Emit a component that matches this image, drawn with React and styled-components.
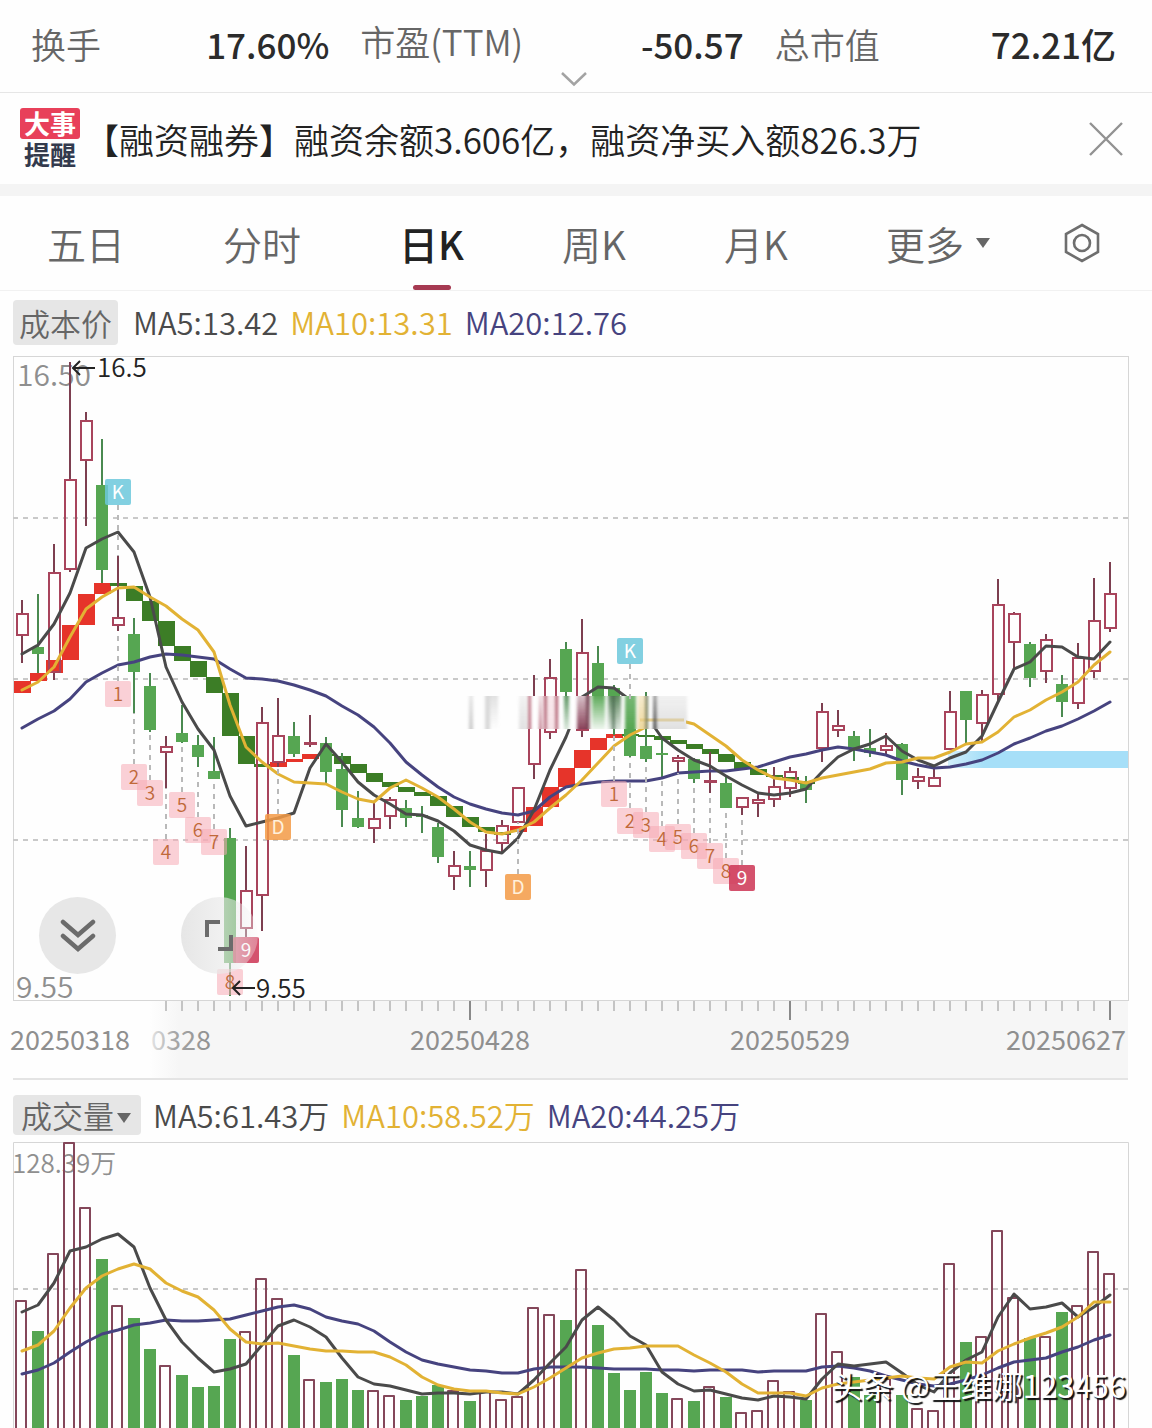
import { useState } from 'react';
import styled, { createGlobalStyle } from 'styled-components';

const COLORS = {
  up: '#a8445c',
  upWick: '#7d3f50',
  down: '#56a652',
  downWick: '#4a8a50',
  stepUp: '#e6342a',
  stepDown: '#3c7d26',
  ma5: '#4a4a4a',
  ma10: '#e2b234',
  ma20: '#46437f',
  grid: '#c9c9c9',
  frame: '#d6d6d6',
};

// one candle every 16 units, the first one at x = 22
const STEP = 16;
const xOf = (i) => 22 + i * STEP;

// [high, body top, body bottom, low, rising]
const candles = [
  [600, 614, 635, 663, 1],
  [594, 647, 654, 673, 0],
  [544, 573, 672, 680, 1],
  [362, 480, 569, 572, 1],
  [412, 421, 460, 526, 1],
  [439, 485, 570, 583, 0],
  [556, 618, 625, 631, 1],
  [618, 634, 672, 713, 0],
  [673, 686, 730, 732, 0],
  [736, 747, 752, 788, 1],
  [705, 733, 742, 743, 0],
  [735, 745, 757, 767, 0],
  [737, 771, 779, 779, 0],
  [828, 838, 963, 996, 0],
  [846, 891, 928, 937, 1],
  [707, 723, 895, 931, 1],
  [698, 736, 762, 767, 1],
  [722, 736, 754, 757, 0],
  [715, 743, 744, 747, 1],
  [737, 743, 772, 783, 0],
  [753, 769, 810, 827, 0],
  [791, 818, 827, 828, 0],
  [803, 819, 828, 843, 1],
  [797, 800, 816, 829, 1],
  [800, 808, 818, 827, 0],
  [806, 815, 816, 833, 0],
  [823, 827, 857, 863, 0],
  [851, 866, 876, 890, 1],
  [851, 866, 870, 887, 0],
  [834, 851, 870, 887, 1],
  [820, 826, 843, 852, 1],
  [788, 788, 822, 822, 1],
  [675, 705, 764, 779, 1],
  [659, 678, 732, 739, 1],
  [642, 649, 692, 720, 0],
  [619, 653, 730, 737, 1],
  [646, 663, 715, 720, 0],
  [685, 688, 712, 735, 0],
  [697, 700, 756, 757, 0],
  [692, 746, 759, 762, 0],
  [738, 753, 754, 778, 0],
  [755, 758, 761, 773, 1],
  [758, 759, 779, 783, 0],
  [752, 781, 782, 793, 1],
  [776, 783, 808, 808, 0],
  [798, 798, 807, 815, 1],
  [792, 800, 803, 817, 1],
  [767, 787, 799, 807, 1],
  [767, 772, 788, 797, 1],
  [776, 784, 790, 803, 0],
  [703, 712, 748, 762, 1],
  [710, 726, 730, 737, 1],
  [731, 736, 748, 761, 0],
  [729, 748, 753, 757, 0],
  [733, 746, 750, 754, 1],
  [743, 744, 780, 795, 0],
  [768, 777, 781, 789, 1],
  [767, 778, 786, 786, 1],
  [691, 712, 749, 749, 1],
  [691, 691, 720, 744, 0],
  [690, 695, 723, 743, 1],
  [579, 605, 694, 703, 1],
  [612, 614, 642, 668, 1],
  [642, 644, 678, 687, 0],
  [634, 640, 671, 683, 1],
  [675, 684, 702, 717, 0],
  [643, 658, 703, 709, 1],
  [578, 621, 671, 678, 1],
  [562, 594, 628, 632, 1],
];

// [top, bottom, rising]
const steps = [
  [681, 693, 1], [673, 681, 1], [660, 673, 1], [625, 660, 1], [594, 625, 1],
  [583, 594, 1], [583, 586, 0], [586, 601, 0], [601, 621, 0], [621, 646, 0],
  [646, 661, 0], [661, 677, 0], [677, 693, 0], [693, 736, 0], [736, 764, 0],
  [764, 767, 0], [762, 767, 1], [759, 762, 1], [754, 759, 1], [754, 756, 0],
  [756, 764, 0], [764, 773, 0], [773, 782, 0], [782, 787, 0], [787, 792, 0],
  [792, 796, 0], [796, 806, 0], [806, 817, 0], [817, 827, 0], [827, 832, 0],
  [832, 835, 0], [826, 832, 1], [807, 826, 1], [787, 807, 1], [768, 787, 1],
  [750, 768, 1], [738, 750, 1], [734, 738, 1], [734, 736, 0], [735, 737, 0],
  [736, 740, 0], [740, 744, 0], [744, 749, 0], [749, 754, 0], [754, 762, 0],
  [762, 769, 0], [769, 775, 0], [775, 777, 0], [777, 780, 0], [781, 784, 0],
];

const priceMa5 = [
  654, 645, 624, 593, 548, 539, 532, 552, 597, 667, 702, 729, 750, 796, 826,
  822, 818, 813, 768, 744, 762, 782, 795, 804, 814, 815, 821, 831, 845, 850,
  853, 838, 810, 770, 737, 697, 687, 688, 700, 715, 738, 750, 760, 766, 776,
  785, 793, 795, 793, 789, 772, 757, 749, 744, 736, 751, 760, 766, 758, 752,
  736, 702, 669, 662, 646, 647, 657, 659, 642,
];

const priceMa10 = [
  690, 682, 667, 637, 609, 597, 588, 587, 597, 606, 619, 630, 652, 705, 747,
  762, 774, 782, 783, 784, 792, 799, 802, 788, 780, 788, 797, 809, 822, 832,
  834, 830, 822, 808, 795, 780, 763, 746, 735, 727, 720, 720, 724, 735, 746,
  760, 770, 778, 780, 783, 778, 775, 772, 769, 763, 762, 758, 758, 752, 744,
  742, 732, 717, 710, 700, 692, 682, 665, 652,
];

const priceMa20 = [
  728, 719, 711, 699, 682, 673, 665, 662, 657, 654, 655, 657, 659, 669, 678,
  679, 681, 685, 690, 696, 706, 715, 727, 743, 762, 775, 787, 797, 804, 809,
  813, 815, 811, 797, 787, 784, 782, 781, 781, 781, 778, 773, 772, 771, 771,
  769, 767, 762, 757, 754, 750, 747, 749, 752, 755, 761, 765, 768, 767, 764,
  760, 753, 744, 738, 731, 726, 719, 711, 702,
];

// [candle, centre y, text, kind, start of the dashed leader]
const markers = [
  [6, 694, '1', 'count', 631],
  [7, 777, '2', 'count', 713],
  [8, 793, '3', 'count', 732],
  [9, 852, '4', 'count', 788],
  [10, 805, '5', 'count', 743],
  [11, 830, '6', 'count', 767],
  [12, 842, '7', 'count', 779],
  [13, 982, '8', 'count', 969],
  [14, 950, '9', 'last', 937],
  [37, 794, '1', 'count', 735],
  [38, 821, '2', 'count', 757],
  [39, 825, '3', 'count', 762],
  [40, 839, '4', 'count', 778],
  [41, 837, '5', 'count', 773],
  [42, 846, '6', 'count', 783],
  [43, 856, '7', 'count', 793],
  [44, 871, '8', 'count', 808],
  [45, 878, '9', 'last', 815],
  [6, 492, 'K', 'sell', 556],
  [38, 651, 'K', 'sell', 700],
  [16, 827, 'D', 'buy', 767],
  [31, 887, 'D', 'buy', 822],
];

const markerStyle = {
  count: { fill: '#f5a9b4', opacity: 0.55, color: '#c0693a' },
  last: { fill: '#cc3453', opacity: 0.85, color: '#fff' },
  sell: { fill: '#6cc8dc', opacity: 0.85, color: '#fff' },
  buy: { fill: '#f39a45', opacity: 0.85, color: '#fff0dc' },
};

// [x, width, colour, top opacity, bottom opacity] of the masked strip
const smears = [
  [469, 4, '#b5b5b5', 0.3, 0.7],
  [485, 5, '#b5b5b5', 0.5, 0.5],
  [490, 8, '#c5c5c5', 0.5, 0],
  [519, 8, '#c5c5c5', 0.2, 0.5],
  [528, 3, '#a8445c', 0.7, 0.8],
  [539, 3, '#a8445c', 0.2, 0.7],
  [545, 12, '#f3d3da', 0.5, 0.6],
  [544, 3, '#a8445c', 0.9, 0.8],
  [555, 3, '#a8445c', 0.9, 0.8],
  [564, 5, '#4a8a50', 0.9, 0.2],
  [577, 12, '#7d2f48', 0.3, 0.9],
  [586, 4, '#6b3a4a', 0.9, 0.5],
  [592, 13, '#56a652', 0.95, 0.1],
  [608, 13, '#4f7d50', 0.9, 0.2],
  [612, 3, '#4a6a50', 0.9, 0.7],
  [625, 11, '#56a652', 0.8, 1],
  [638, 10, '#e9cf86', 0.4, 0.8],
  [645, 3, '#5d6b4c', 0.8, 0.8],
  [653, 4, '#4a4a4a', 0.5, 0.9],
  [657, 30, '#bdbdbd', 0.2, 0.45],
];

// [bar top, rising]
const volumes = [
  [1300, 1], [1331, 0], [1253, 1], [1142, 1], [1207, 1], [1259, 0], [1305, 1],
  [1318, 0], [1349, 0], [1365, 1], [1375, 0], [1387, 0], [1386, 0], [1339, 0],
  [1331, 1], [1278, 1], [1298, 1], [1355, 0], [1379, 1], [1382, 0], [1379, 0],
  [1390, 0], [1390, 1], [1395, 1], [1400, 0], [1396, 0], [1385, 0], [1390, 1],
  [1401, 0], [1390, 1], [1399, 1], [1396, 1], [1307, 1], [1314, 1], [1320, 0],
  [1269, 1], [1325, 0], [1373, 0], [1390, 0], [1372, 0], [1393, 0], [1398, 1],
  [1401, 0], [1386, 1], [1397, 0], [1412, 1], [1410, 1], [1380, 1], [1391, 1],
  [1400, 0], [1313, 1], [1351, 1], [1377, 0], [1395, 0], [1378, 1], [1395, 0],
  [1408, 1], [1410, 1], [1263, 1], [1342, 0], [1336, 1], [1230, 1], [1297, 1],
  [1338, 0], [1336, 1], [1312, 0], [1305, 1], [1251, 1], [1273, 1],
];

const volumeMa5 = [
  1312, 1305, 1283, 1251, 1247, 1239, 1234, 1247, 1288, 1320, 1342, 1358, 1372,
  1369, 1364, 1345, 1326, 1320, 1327, 1337, 1358, 1377, 1384, 1386, 1390, 1394,
  1393, 1393, 1394, 1392, 1392, 1394, 1380, 1363, 1347, 1320, 1307, 1320, 1336,
  1345, 1372, 1384, 1391, 1390, 1394, 1398, 1400, 1396, 1397, 1399, 1379, 1364,
  1366, 1364, 1362, 1373, 1385, 1392, 1373, 1360, 1352, 1317, 1294, 1309, 1307,
  1303, 1317, 1307, 1295,
];

const volumeMa10 = [
  1351, 1345, 1331, 1308, 1288, 1276, 1269, 1264, 1269, 1283, 1291, 1297, 1310,
  1329, 1342, 1344, 1343, 1346, 1349, 1351, 1351, 1352, 1352, 1357, 1365, 1377,
  1385, 1389, 1391, 1391, 1393, 1394, 1387, 1378, 1368, 1358, 1353, 1349, 1348,
  1346, 1346, 1346, 1355, 1363, 1372, 1384, 1393, 1393, 1393, 1396, 1388, 1384,
  1382, 1380, 1378, 1376, 1378, 1379, 1367, 1362, 1363, 1351, 1344, 1338, 1333,
  1327, 1317, 1302, 1302,
];

const volumeMa20 = [
  1374, 1370, 1363, 1352, 1342, 1334, 1330, 1325, 1323, 1320, 1321, 1321, 1320,
  1319, 1315, 1311, 1307, 1305, 1309, 1317, 1321, 1324, 1331, 1342, 1352, 1360,
  1364, 1367, 1370, 1371, 1373, 1373, 1369, 1367, 1367, 1367, 1368, 1369, 1369,
  1369, 1370, 1370, 1371, 1370, 1370, 1370, 1372, 1371, 1371, 1371, 1367, 1366,
  1368, 1371, 1376, 1380, 1384, 1386, 1384, 1380, 1375, 1368, 1362, 1360, 1358,
  1352, 1347, 1340, 1335,
];

const toPoints = (values) => values.map((y, i) => `${xOf(i)},${y}`).join(' ');

const tabs = ['五日', '分时', '日K', '周K', '月K'];

export default function App() {
  const [tab, setTab] = useState('日K');
  const [alertOpen, setAlertOpen] = useState(true);

  return (
    <>
      <GlobalStyle />
      <Page>
        <Quotes>
          <QuoteList>
            <Quote>
              <QuoteLabel>换手</QuoteLabel>
              <QuoteValue>17.60%</QuoteValue>
            </Quote>
            <Quote>
              <QuoteLabel $raised>市盈(TTM)</QuoteLabel>
              <QuoteValue>-50.57</QuoteValue>
            </Quote>
            <Quote>
              <QuoteLabel>总市值</QuoteLabel>
              <QuoteValue>72.21亿</QuoteValue>
            </Quote>
          </QuoteList>
          <ExpandButton type="button" aria-label="展开">
            <svg width="28" height="16" viewBox="0 0 28 16">
              <path
                d="M2 2 L14 13.500 L26 2"
                fill="none"
                stroke="#a3a3a3"
                strokeWidth="2.500"
              />
            </svg>
          </ExpandButton>
        </Quotes>

        {alertOpen && (
          <Alert>
            <AlertLogo>
              <AlertLogoTop>大事</AlertLogoTop>
              <AlertLogoBottom>提醒</AlertLogoBottom>
            </AlertLogo>
            <AlertText href="#margin">
              【融资融券】融资余额3.606亿，融资净买入额826.3万
            </AlertText>
            <IconButton
              type="button"
              aria-label="关闭"
              onClick={() => setAlertOpen(false)}
            >
              <svg width="36" height="36" viewBox="0 0 36 36">
                <path
                  d="M2 2 L34 34 M34 2 L2 34"
                  fill="none"
                  stroke="#929292"
                  strokeWidth="2.400"
                />
              </svg>
            </IconButton>
          </Alert>
        )}

        <TabBar>
          <TabList>
            {tabs.map((name) => (
              <Tab
                key={name}
                type="button"
                $active={name === tab}
                onClick={() => setTab(name)}
              >
                {name}
              </Tab>
            ))}
            <Tab type="button" aria-haspopup="menu">
              更多
              <Caret />
            </Tab>
          </TabList>
          <IconButton type="button" aria-label="设置">
            <svg width="36" height="40" viewBox="0 0 36 40">
              <g fill="none" stroke="#6e6e6e" strokeWidth="2.600">
                <path d="M18 2 L34 11 V29 L18 38 L2 29 V11 Z" />
                <circle cx="18" cy="20" r="8" />
              </g>
            </svg>
          </IconButton>
        </TabBar>

        <Panel>
          <Legend>
            <Pill type="button">成本价</Pill>
            <Average $color={COLORS.ma5}>MA5:13.42</Average>
            <Average $color={COLORS.ma10}>MA10:13.31</Average>
            <Average $color={COLORS.ma20}>MA20:12.76</Average>
          </Legend>
          <ChartBox>
            <PriceChart />
            <RoundButtons>
              <RoundButton type="button" aria-label="收起">
                <svg width="36" height="36" viewBox="0 0 36 36">
                  <path
                    d="M3 4 L18 17 L33 4 M3 18 L18 31 L33 18"
                    fill="none"
                    stroke="#6b6b6b"
                    strokeWidth="4.500"
                    strokeLinecap="round"
                  />
                </svg>
              </RoundButton>
              <RoundButton type="button" aria-label="全屏" $faded>
                <svg width="36" height="36" viewBox="0 0 36 36">
                  <path
                    d="M5 19 V4 H18 M16 31 H29 V17"
                    fill="none"
                    stroke="#6b6b6b"
                    strokeWidth="4"
                  />
                </svg>
              </RoundButton>
            </RoundButtons>
          </ChartBox>
          <TimeAxis />
        </Panel>

        <Panel>
          <Legend $short>
            <SelectBox>
              <PillSelect aria-label="指标" defaultValue="vol">
                <option value="vol">成交量</option>
                <option value="macd">MACD</option>
              </PillSelect>
              <SelectCaret />
            </SelectBox>
            <Average $color={COLORS.ma5}>MA5:61.43万</Average>
            <Average $color={COLORS.ma10}>MA10:58.52万</Average>
            <Average $color={COLORS.ma20}>MA20:44.25万</Average>
          </Legend>
          <ChartBox>
            <VolumeChart />
            <Watermark>头条 @王维娜123456</Watermark>
          </ChartBox>
        </Panel>
      </Page>
    </>
  );
}

function Candle({ x, candle }) {
  const [high, top, bottom, low, up] = candle;
  const height = bottom - top;
  if (!up) {
    return (
      <g>
        <path d={`M${x} ${high} V${low}`} stroke={COLORS.downWick} strokeWidth="2" />
        <rect
          x={x - 6}
          y={top}
          width="12"
          height={Math.max(height, 2)}
          fill={COLORS.down}
        />
      </g>
    );
  }
  return (
    <g stroke={COLORS.up} strokeWidth="2" fill="none">
      <path
        d={`M${x} ${high} V${top} M${x} ${bottom} V${low}`}
        stroke={COLORS.upWick}
      />
      <rect x={x - 5} y={top} width="11" height={height} />
    </g>
  );
}

function Marker({ marker }) {
  const [i, y, text, kind, from] = marker;
  const look = markerStyle[kind];
  const x = xOf(i);
  const end = y < from ? y + 13 : y - 13;
  return (
    <g>
      <path
        d={`M${x} ${end} V${from}`}
        stroke="#b9b9b9"
        strokeWidth="2"
        strokeDasharray="5 5"
      />
      <rect
        x={x - 13}
        y={y - 13}
        width="26"
        height="26"
        rx="2"
        fill={look.fill}
        fillOpacity={look.opacity}
      />
      <ChartText x={x} y={y + 7} $size={19} $color={look.color} $middle $strong={kind !== 'count'}>
        {text}
      </ChartText>
    </g>
  );
}

function Averages({ ma5, ma10, ma20 }) {
  return (
    <g fill="none" strokeWidth="3" strokeLinejoin="round" strokeLinecap="round">
      <polyline points={toPoints(ma20)} stroke={COLORS.ma20} />
      <polyline points={toPoints(ma5)} stroke={COLORS.ma5} />
      <polyline points={toPoints(ma10)} stroke={COLORS.ma10} />
    </g>
  );
}

function GridLine({ y }) {
  return (
    <path
      d={`M13 ${y} H1128`}
      stroke={COLORS.grid}
      strokeWidth="2"
      strokeDasharray="5 5"
    />
  );
}

function PriceChart() {
  return (
    <Chart viewBox="13 356 1116 645" role="img" aria-label="日K线">
      <defs>
        <linearGradient id="band">
          <stop offset="0" stopColor="#a6dff8" stopOpacity="0.5" />
          <stop offset="0.200" stopColor="#a6dff8" />
          <stop offset="1" stopColor="#a6dff8" />
        </linearGradient>
        {smears.map(([x, , color, top, bottom]) => (
          <linearGradient key={x} id={`smear${x}`} x1="0" y1="0" x2="0" y2="1">
            <stop offset="0" stopColor={color} stopOpacity={top} />
            <stop offset="1" stopColor={color} stopOpacity={bottom} />
          </linearGradient>
        ))}
        <filter id="soft" x="-0.100" y="0" width="1.200" height="1">
          <feGaussianBlur stdDeviation="1.500 0" />
        </filter>
      </defs>
      <rect x="13.500" y="356.500" width="1115" height="644" fill="none" stroke={COLORS.frame} />
      <GridLine y={518} />
      <GridLine y={679} />
      <GridLine y={840} />
      <rect x="948" y="751" width="180" height="17" fill="url(#band)" />
      <ChartText x="17" y="386" $size={30} $color="#8f8f8f">
        16.50
      </ChartText>
      <ChartText x="16" y="998" $size={30} $color="#8f8f8f">
        9.55
      </ChartText>
      {steps.map(([top, bottom, up], i) => (
        <rect
          key={i}
          x={xOf(i) - 8}
          y={top}
          width="17"
          height={bottom - top}
          fill={up ? COLORS.stepUp : COLORS.stepDown}
        />
      ))}
      {candles.map((candle, i) => (
        <Candle key={i} x={xOf(i)} candle={candle} />
      ))}
      <Averages ma5={priceMa5} ma10={priceMa10} ma20={priceMa20} />
      <rect x="466" y="696" width="220" height="33" fill="#fefefe" />
      <path d="M640 720 H684" stroke={COLORS.ma10} strokeOpacity="0.500" strokeWidth="3" />
      <g filter="url(#soft)">
        {smears.map(([x, width]) => (
          <rect key={x} x={x} y="696" width={width} height="33" fill={`url(#smear${x})`} />
        ))}
      </g>
      {markers.map((marker, i) => (
        <Marker key={i} marker={marker} />
      ))}
      <g fill="none" stroke="#222" strokeWidth="2">
        <path d="M95 368 H73 M80 361 L73 368 L80 375" />
        <path d="M255 988 H233 M240 981 L233 988 L240 995" />
      </g>
      <ChartText x="97" y="377" $size={26} $color="#222">
        16.5
      </ChartText>
      <ChartText x="256" y="998" $size={26} $color="#222">
        9.55
      </ChartText>
    </Chart>
  );
}

function TimeAxis() {
  const ticks = candles.map((_, i) => i).filter((i) => i >= 9);
  return (
    <Chart viewBox="13 1001 1116 79" role="img" aria-label="日期">
      <defs>
        <linearGradient id="axis">
          <stop offset="0" stopColor="#f6f6f6" stopOpacity="0" />
          <stop offset="0.030" stopColor="#f6f6f6" />
          <stop offset="1" stopColor="#f6f6f6" />
        </linearGradient>
        <linearGradient id="cut">
          <stop offset="0" stopColor="#e4e4e4" />
          <stop offset="0.400" stopColor="#a6a6a6" />
          <stop offset="1" stopColor="#8f8f8f" />
        </linearGradient>
      </defs>
      <rect x="150" y="1001" width="978" height="78" fill="url(#axis)" />
      {ticks.map((i) => (
        <path
          key={i}
          d={`M${xOf(i)} 1001 V${i % 20 === 8 ? 1020 : 1011}`}
          stroke={i % 20 === 8 ? '#8a8a8a' : '#c4c4c4'}
          strokeWidth="2"
        />
      ))}
      <path d="M13 1079 H1128" stroke="#e4e4e4" strokeWidth="2" />
      <ChartText x="10" y="1050" $size={27} $color="#8f8f8f" $strong>
        20250318
      </ChartText>
      <ChartText x="151" y="1050" $size={27} $color="url(#cut)" $strong>
        0328
      </ChartText>
      <ChartText x="470" y="1050" $size={27} $color="#8f8f8f" $middle $strong>
        20250428
      </ChartText>
      <ChartText x="790" y="1050" $size={27} $color="#8f8f8f" $middle $strong>
        20250529
      </ChartText>
      <ChartText x="1066" y="1050" $size={27} $color="#8f8f8f" $middle $strong>
        20250627
      </ChartText>
    </Chart>
  );
}

function VolumeChart() {
  return (
    <Chart viewBox="13 1142 1116 286" role="img" aria-label="成交量">
      <path d="M13.500 1428 V1142.500 H1128.500 V1428" fill="none" stroke={COLORS.frame} />
      <GridLine y={1289} />
      <ChartText x="12" y="1173" $size={26} $color="#8f8f8f">
        128.39万
      </ChartText>
      {volumes.map(([top, up], i) =>
        up ? (
          <path
            key={i}
            d={`M${xOf(i) - 6} 1428 V${top + 1} h10 V1428`}
            fill="none"
            stroke="#84475a"
            strokeWidth="2"
            strokeLinejoin="round"
          />
        ) : (
          <rect
            key={i}
            x={xOf(i) - 6}
            y={top}
            width="12"
            height={1428 - top}
            fill={COLORS.down}
          />
        )
      )}
      <Averages ma5={volumeMa5} ma10={volumeMa10} ma20={volumeMa20} />
    </Chart>
  );
}

const GlobalStyle = createGlobalStyle`
  * {
    box-sizing: border-box;
  }

  body {
    margin: 0;
    background: #fefefe;
  }

  body,
  button,
  select {
    font-family: 'Noto Sans CJK SC', sans-serif;
    font-weight: 350;
  }

  button,
  select {
    padding: 0;
    border: 0;
    background: none;
    cursor: pointer;
  }

  svg {
    display: block;
  }
`;

const Page = styled.main`
  width: 100%;
  overflow: hidden;
`;

const Quotes = styled.section`
  display: flex;
  flex-direction: column;
  align-items: center;
  padding: 22px 36px 5px 31px;
  border-bottom: 1px solid #e6e6e6;
`;

const QuoteList = styled.dl`
  display: grid;
  grid-template-columns: 298fr 383fr 341fr;
  gap: 31px;
  width: 100%;
  margin: 0;
`;

const Quote = styled.div`
  display: flex;
  justify-content: space-between;
  line-height: 44px;
`;

const QuoteLabel = styled.dt`
  color: #666;
  font-size: 35px;
  line-height: ${(props) => (props.$raised ? '38px' : '44px')};
`;

const QuoteValue = styled.dd`
  margin: 0;
  color: #2b2b2b;
  font-size: 35px;
  font-weight: 500;
`;

const ExpandButton = styled.button`
  margin-top: 5px;
`;

const Alert = styled.section`
  display: flex;
  align-items: center;
  height: 103px;
  padding: 0 28px 0 20px;
  border-bottom: 12px solid #f4f4f4;
`;

const AlertLogo = styled.div`
  width: 60px;
  text-align: center;
  font-size: 26px;
  font-weight: 700;
`;

const AlertLogoTop = styled.div`
  height: 31px;
  border-radius: 3px;
  background: #e8405a;
  color: #fff;
  line-height: 30px;
`;

const AlertLogoBottom = styled.div`
  color: #333a4d;
  line-height: 30px;
`;

const AlertText = styled.a`
  flex: 1;
  margin-left: 4px;
  color: #222;
  font-size: 35px;
  line-height: 44px;
  text-decoration: none;
  white-space: nowrap;
`;

const IconButton = styled.button`
  flex: none;
`;

const TabBar = styled.div`
  display: flex;
  align-items: center;
  height: 95px;
  padding: 0 52px 0 47px;
  border-bottom: 1px solid #f1f1f1;
`;

const TabList = styled.nav`
  display: flex;
  flex: 1;
  justify-content: space-between;
  align-self: stretch;
  margin-right: 74px;
`;

const Tab = styled.button`
  display: flex;
  position: relative;
  align-items: center;
  gap: 12px;
  color: ${(props) => (props.$active ? '#222' : '#666')};
  font-size: 39px;
  font-weight: ${(props) => (props.$active ? 500 : 350)};

  &::after {
    content: '';
    display: ${(props) => (props.$active ? 'block' : 'none')};
    position: absolute;
    bottom: 0;
    left: 50%;
    width: 38px;
    height: 5px;
    border-radius: 3px;
    background: #a63a52;
    transform: translateX(-50%);
  }
`;

const Caret = styled.span`
  border: 7px solid transparent;
  border-top: 10px solid #666;
  border-bottom: 0;
`;

const Panel = styled.section`
  padding: 0 23px 0 13px;
`;

const Legend = styled.div`
  display: flex;
  align-items: center;
  gap: 12px;
  height: ${(props) => (props.$short ? '62px' : '65px')};
  padding: ${(props) => (props.$short ? '8px 0 0' : '0 0 3px')};
`;

const Pill = styled.button`
  height: 45px;
  margin-right: 3px;
  padding: 0 6px;
  border-radius: 4px;
  background: #e6e6e6;
  color: #666;
  font-size: 31px;
  line-height: 45px;
`;

const SelectBox = styled.div`
  position: relative;
`;

const PillSelect = styled.select`
  width: 128px;
  height: 40px;
  padding: 0 26px 0 8px;
  border-radius: 4px;
  background: #e6e6e6;
  color: #666;
  font-size: 31px;
  line-height: 40px;
  appearance: none;
`;

const SelectCaret = styled(Caret)`
  position: absolute;
  top: 18px;
  right: 10px;
  pointer-events: none;
`;

const Average = styled.span`
  color: ${(props) => props.$color};
  font-size: 31px;
  line-height: 40px;
  white-space: nowrap;
`;

const ChartBox = styled.div`
  position: relative;
`;

const Chart = styled.svg`
  width: 100%;
  height: auto;
  overflow: visible;
`;

const ChartText = styled.text`
  fill: ${(props) => props.$color};
  font-size: ${(props) => props.$size}px;
  font-weight: ${(props) => (props.$strong ? 400 : 350)};
  text-anchor: ${(props) => (props.$middle ? 'middle' : 'start')};
`;

const RoundButtons = styled.div`
  display: flex;
  position: absolute;
  bottom: 27px;
  left: 26px;
  gap: 65px;
`;

const RoundButton = styled.button`
  display: grid;
  width: 77px;
  height: 77px;
  place-items: center;
  border-radius: 50%;
  background: ${(props) =>
    props.$faded
      ? 'linear-gradient(90deg, #e6e6e6 0%, rgba(236, 236, 236, 0.5) 75%, rgba(250, 250, 250, 0.3) 100%)'
      : '#e7e7e7'};
`;

const Watermark = styled.span`
  position: absolute;
  right: 3px;
  bottom: 21px;
  color: #fff;
  font-size: 31px;
  font-weight: 400;
  line-height: 44px;
  text-shadow: 2px 2px 1px #111;
`;
